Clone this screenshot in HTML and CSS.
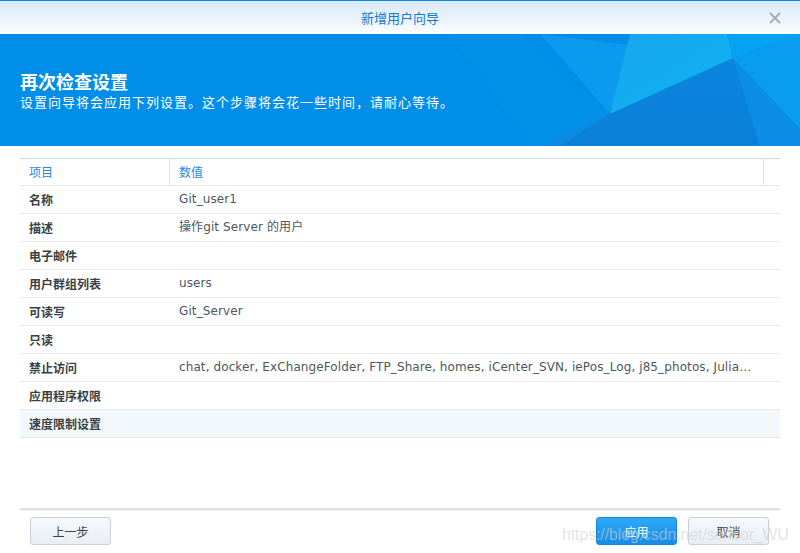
FILE: index.html
```html
<!DOCTYPE html>
<html lang="zh-CN">
<head>
<meta charset="utf-8">
<title>新增用户向导</title>
<link rel="stylesheet" href="styles.css">
</head>
<body>
<div class="window">
  <div class="titlebar">
    <span class="title">新增用户向导</span>
    <svg class="close" width="12" height="12" viewBox="0 0 12 12"><path d="M1 1 L11 11 M11 1 L1 11" stroke="#a4abb3" stroke-width="1.8" fill="none"/></svg>
  </div>
  <div class="banner">
    <svg class="facets" width="800" height="112" viewBox="0 0 800 112" preserveAspectRatio="none">
      <defs>
        <linearGradient id="g1" x1="0" y1="0" x2="1" y2="1">
          <stop offset="0" stop-color="#1aa6ee"/>
          <stop offset="1" stop-color="#0cb4f2"/>
        </linearGradient>
        <linearGradient id="g2" x1="0" y1="0" x2="0" y2="1">
          <stop offset="0" stop-color="#0a86de"/>
          <stop offset="1" stop-color="#0b7fd8"/>
        </linearGradient>
      </defs>
      <polygon points="450,0 520,0 610,80 560,112 530,112" fill="#0a94ec" opacity="0.3"/>
      <polygon points="540,0 733,24 610,80" fill="#0c9aee"/>
      <polygon points="630,0 727,0 733,24 610,80" fill="url(#g1)"/>
      <polygon points="727,0 800,0 733,24" fill="#05a3f2"/>
      <polygon points="733,24 610,80 560,112 800,112 800,95" fill="url(#g2)"/>
      <polygon points="733,24 800,95 800,112 760,112" fill="#0b8ee4"/>
      <polygon points="733,24 800,0 800,95" fill="#0a9cee"/>
      <polygon points="610,80 540,112 560,112" fill="#0a8ae0"/>
    </svg>
    <div class="banner-text">
      <h1 class="banner-title">再次检查设置</h1>
      <p class="banner-sub">设置向导将会应用下列设置。这个步骤将会花一些时间，请耐心等待。</p>
    </div>
  </div>
  <div class="content">
    <div class="grid">
      <div class="grid-head">
        <div class="cell c1">项目</div>
        <div class="cell c2">数值</div>
        <div class="cell c3"></div>
      </div>
      <div class="row"><div class="cell c1 label">名称</div><div class="cell c2 value">Git_user1</div></div>
      <div class="row"><div class="cell c1 label">描述</div><div class="cell c2 value">操作git Server 的用户</div></div>
      <div class="row"><div class="cell c1 label">电子邮件</div><div class="cell c2 value"></div></div>
      <div class="row"><div class="cell c1 label">用户群组列表</div><div class="cell c2 value">users</div></div>
      <div class="row"><div class="cell c1 label">可读写</div><div class="cell c2 value">Git_Server</div></div>
      <div class="row"><div class="cell c1 label">只读</div><div class="cell c2 value"></div></div>
      <div class="row"><div class="cell c1 label">禁止访问</div><div class="cell c2 value">chat, docker, ExChangeFolder, FTP_Share, homes, iCenter_SVN, iePos_Log, j85_photos, JuliaLink, MyFile, photo, public, video, web</div></div>
      <div class="row"><div class="cell c1 label">应用程序权限</div><div class="cell c2 value"></div></div>
      <div class="row hover"><div class="cell c1 label">速度限制设置</div><div class="cell c2 value"></div></div>
    </div>
  </div>
  <div class="footer">
    <button class="btn">上一步</button>
    <div class="spacer"></div>
    <button class="btn primary">应用</button>
    <button class="btn">取消</button>
    <span class="watermark">https://blog.csdn.net/sensor_WU</span>
  </div>
</div>
</body>
</html>
```

FILE: styles.css
```css
html, body {
  margin: 0;
  padding: 0;
  background: #ffffff;
}
.window {
  width: 800px;
  height: 553px;
  display: flex;
  flex-direction: column;
  font-family: "DejaVu Sans", "Noto Sans CJK SC", sans-serif;
  position: relative;
  overflow: hidden;
}
.titlebar {
  height: 33px;
  border-top: 1px solid #0a86e0;
  background: linear-gradient(#d9e9f8, #fbfdfe);
  display: flex;
  align-items: center;
  justify-content: center;
  position: relative;
  flex: none;
}
.title {
  font-family: "Noto Sans CJK SC", sans-serif;
  font-size: 13px;
  color: #0b79d6;
}
.close {
  position: absolute;
  right: 19px;
  top: 11px;
}
.banner {
  height: 112px;
  background: #008ee9;
  position: relative;
  flex: none;
  display: flex;
  align-items: flex-start;
}
.facets {
  position: absolute;
  left: 0;
  top: 0;
}
.banner-text {
  position: relative;
  padding: 36px 0 0 20px;
  color: #fff;
  font-family: "Noto Sans CJK SC", sans-serif;
}
.banner-title {
  margin: 0;
  font-size: 18px;
  font-weight: bold;
  line-height: 23px;
}
.banner-sub {
  margin: 0;
  font-size: 13px;
  line-height: 17px;
  letter-spacing: 1px;
}
.content {
  flex: 1;
  padding: 12px 20px 0 20px;
}
.grid {
  border-top: 1px solid #c8dcef;
}
.grid-head {
  display: flex;
  height: 26px;
  border-bottom: 1px solid #e4e8ec;
}
.grid-head .cell {
  color: #1f87df;
  font-family: "Noto Sans CJK SC", sans-serif;
}
.cell {
  font-size: 12px;
  line-height: 26px;
  padding-left: 9px;
  box-sizing: border-box;
  white-space: nowrap;
  overflow: hidden;
  text-overflow: ellipsis;
}
.c1 { width: 150px; flex: none; }
.c2 { flex: 1; min-width: 0; }
.grid-head .c1 { border-right: 1px solid #dbe6f1; }
.c3 { width: 17px; flex: none; border-left: 1px solid #dbe6f1; }
.row {
  display: flex;
  height: 27px;
  border-bottom: 1px solid #e6e9ec;
  align-items: center;
}
.row .cell { line-height: 27px; }
.row.hover { background: #f3f8fd; }
.label {
  font-family: "Noto Sans CJK SC", sans-serif;
  color: #3a3f44;
  font-weight: 600;
}
.value {
  color: #4d5761;
  padding-left: 9px;
  padding-right: 26px;
  letter-spacing: 0.1px;
}
.footer {
  flex: none;
  box-sizing: border-box;
  height: 45px;
  margin: 0 20px;
  border-top: 2px solid #dfe1e3;
  box-shadow: inset 0 1px 0 #eef0f2;
  display: flex;
  align-items: flex-start;
  padding: 7px 11px 0 10px;
  gap: 11px;
  position: relative;
}
.spacer { flex: 1; }
.btn {
  width: 81px;
  height: 28px;
  border: 1px solid #c6d1dc;
  border-radius: 3px;
  background: linear-gradient(#f6f9fc, #e8eef4);
  font-family: "Noto Sans CJK SC", sans-serif;
  font-size: 12px;
  color: #3c4248;
  padding: 0;
}
.btn.primary {
  border-color: #1886dc;
  background: linear-gradient(#2ea8f8, #168ee6);
  color: #fff;
}
.watermark {
  position: absolute;
  left: 542px;
  top: 16px;
  font-family: "Liberation Sans", sans-serif;
  font-size: 15.7px;
  line-height: 18px;
  color: rgba(205, 208, 212, 0.6);
  pointer-events: none;
  white-space: nowrap;
}
```
